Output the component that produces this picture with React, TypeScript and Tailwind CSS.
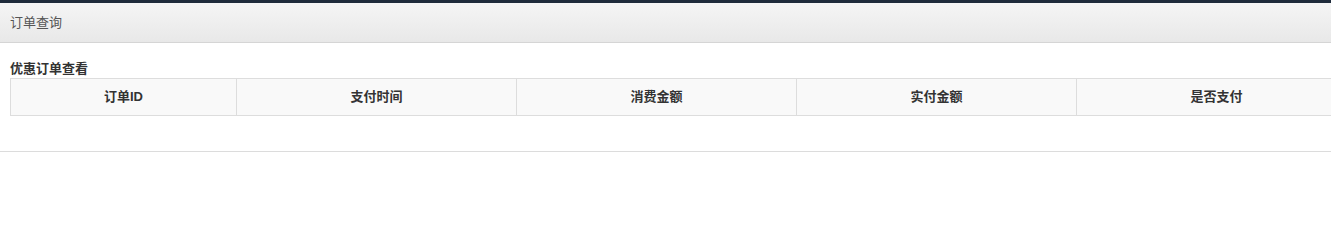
const columns = [
  { label: "订单ID", width: "w-[225px]" },
  { label: "支付时间", width: "w-[280px]" },
  { label: "消费金额", width: "w-[280px]" },
  { label: "实付金额", width: "w-[280px]" },
  { label: "是否支付", width: "w-[280px]" },
]

const App = () => {
  return (
    <div
      className="w-[1331px] h-[211px] overflow-hidden bg-white text-[13px] text-[#333]"
      style={{ fontFamily: '"Liberation Sans", "Noto Sans CJK SC", sans-serif' }}
    >
      <div className="h-[3px] bg-[#1f2b3b]" />
      <div className="border-b border-[#dcdcdc]">
        <div className="h-[40px] flex items-center px-[10px] bg-gradient-to-b from-[#f5f5f5] to-[#e8e8e8] border-b border-[#d5d5d5] text-[#555]">
          订单查询
        </div>
        <div className="pl-[10px] pt-[17px] pb-[35px]">
          <div className="font-bold leading-[17px] mb-[1px]">优惠订单查看</div>
          <div className="flex w-[1346px] border border-[#ddd] bg-[#f9f9f9]">
            {columns.map((c, i) => (
              <div
                key={c.label}
                className={`${c.width} h-[36px] flex items-center justify-center font-bold shrink-0 ${
                  i > 0 ? "border-l border-[#ddd]" : ""
                }`}
              >
                {c.label}
              </div>
            ))}
          </div>
        </div>
      </div>
    </div>
  )
}

export default App
